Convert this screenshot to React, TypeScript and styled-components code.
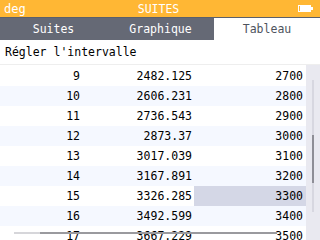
import styled, { createGlobalStyle } from "styled-components";

const GlobalStyle = createGlobalStyle`
  html, body {
    margin: 0;
    padding: 0;
    background: #ffffff;
  }
`;

const rows = [
  { n: "9", u: "2482.125", x: "2700" },
  { n: "10", u: "2606.231", x: "2800" },
  { n: "11", u: "2736.543", x: "2900" },
  { n: "12", u: "2873.37", x: "3000" },
  { n: "13", u: "3017.039", x: "3100" },
  { n: "14", u: "3167.891", x: "3200" },
  { n: "15", u: "3326.285", x: "3300", selected: true },
  { n: "16", u: "3492.599", x: "3400" },
  { n: "17", u: "3667.229", x: "3500" },
];

const tabs = [
  { id: "suites", label: "Suites" },
  { id: "graph", label: "Graphique" },
  { id: "table", label: "Tableau", active: true },
];

export default function App() {
  return (
    <>
      <GlobalStyle />
      <Screen>
        <Header>
          <HeaderText>deg</HeaderText>
          <HeaderTitle>SUITES</HeaderTitle>
          <Battery>
            <svg width="15" height="7" viewBox="0 0 15 7">
              <rect x="0" y="0" width="13" height="7" fill="#ffffff" />
              <rect x="1" y="1" width="1" height="5" fill="#ffb734" />
              <rect x="13" y="2" width="2" height="3" fill="#ffffff" />
            </svg>
          </Battery>
        </Header>

        <TabBar>
          {tabs.map((tab) => (
            <Tab key={tab.id} active={!!tab.active}>
              {tab.label}
            </Tab>
          ))}
        </TabBar>

        <Title>Régler l'intervalle</Title>

        <Body>
          <Table>
            {rows.map((row, i) => (
              <Row key={row.n} alt={i % 2 === 1}>
                <Cell>{row.n}</Cell>
                <Cell>{row.u}</Cell>
                <Cell selected={!!row.selected}>{row.x}</Cell>
              </Row>
            ))}
            <HScroll>
              <HTrack />
              <HThumb />
            </HScroll>
          </Table>
          <Gutter>
            <VTrack>
              <VThumb />
            </VTrack>
          </Gutter>
        </Body>
      </Screen>
    </>
  );
}

const Screen = styled.div`
  width: 320px;
  height: 240px;
  overflow: hidden;
  display: flex;
  flex-direction: column;
  font-family: "DejaVu Sans Mono", "Liberation Mono", monospace;
  font-size: 11.5px;
  color: #000000;
`;

const Header = styled.div`
  height: 17px;
  flex-shrink: 0;
  background: #ffb734;
  border-bottom: 1px solid #5b606b;
  display: flex;
  align-items: center;
  padding: 0 6px 0 4px;
  color: #ffffff;
`;

const HeaderText = styled.span`
  width: 60px;
  font-size: 12px;
`;

const HeaderTitle = styled.span`
  flex: 1;
  text-align: center;
  font-size: 11.5px;
`;

const Battery = styled.span`
  width: 60px;
  display: flex;
  justify-content: flex-end;
  padding-right: 1px;
`;

const TabBar = styled.div`
  height: 22px;
  flex-shrink: 0;
  display: grid;
  grid-template-columns: 107px 107px 106px;
  background: #656975;
`;

const Tab = styled.div<{ active: boolean }>`
  display: flex;
  align-items: center;
  justify-content: center;
  font-size: 11.5px;
  color: ${(p) => (p.active ? "#4e535d" : "#ffffff")};
  background: ${(p) => (p.active ? "#ffffff" : "transparent")};
`;

const Title = styled.div`
  height: 25px;
  flex-shrink: 0;
  box-sizing: border-box;
  padding: 3px 0 0 5px;
  line-height: 18px;
  font-size: 11.5px;
  border-bottom: 1px solid #eeeeee;
`;

const Body = styled.div`
  flex: 1;
  display: flex;
  min-height: 0;
`;

const Table = styled.div`
  position: relative;
  width: 306px;
  padding-top: 1px;
  overflow: hidden;
`;

const Row = styled.div<{ alt: boolean }>`
  height: 20px;
  display: grid;
  grid-template-columns: 82px 112px 112px;
  background: ${(p) => (p.alt ? "#f5f8ff" : "#ffffff")};
`;

const Cell = styled.div<{ selected?: boolean }>`
  line-height: 20px;
  text-align: right;
  padding-right: 2px;
  background: ${(p) => (p.selected ? "#d4d7e6" : "transparent")};
  &:last-child {
    padding-right: 3px;
  }
`;

const HScroll = styled.div`
  position: absolute;
  left: 14px;
  top: 167px;
  width: 263px;
  height: 2px;
  display: flex;
`;

const HTrack = styled.div`
  width: 26px;
  background: #d6d6da;
`;

const HThumb = styled.div`
  flex: 1;
  background: #9a9a9e;
`;

const Gutter = styled.div`
  width: 14px;
  background: #e9e9f0;
  display: flex;
  justify-content: center;
  padding-top: 15px;
  box-sizing: border-box;
`;

const VTrack = styled.div`
  width: 2px;
  height: 132px;
  background: #d7d7e0;
  padding-top: 55px;
  box-sizing: border-box;
`;

const VThumb = styled.div`
  width: 2px;
  height: 48px;
  background: #8e8e96;
`;
